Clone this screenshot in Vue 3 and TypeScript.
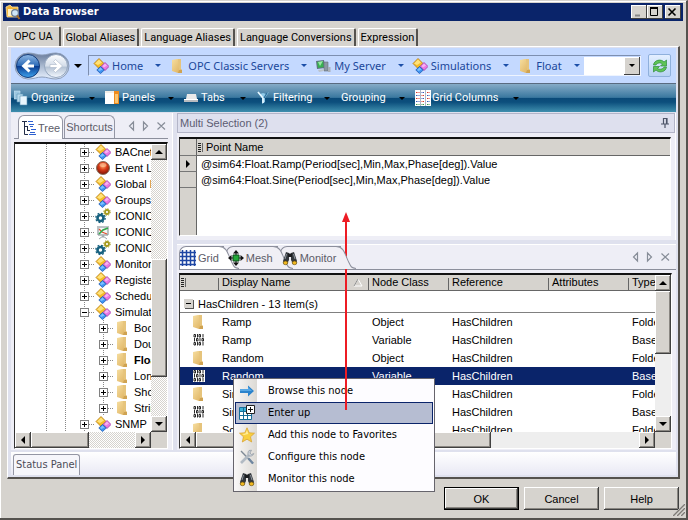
<script setup lang="ts">
import { ref } from 'vue'

interface TreeRow { label: string; icon: string; child?: boolean; open?: boolean; bold?: boolean }
interface NodeRow { name: string; kind: 'Object' | 'Variable'; type: string }

const pageTabs = ['OPC UA', 'Global Aliases', 'Language Aliases', 'Language Conversions', 'Expression']
const activePage = ref('OPC UA')

const crumbs = [
  { label: 'Home', icon: 'cubes' },
  { label: 'OPC Classic Servers', icon: 'folder' },
  { label: 'My Server', icon: 'server' },
  { label: 'Simulations', icon: 'cubes' },
  { label: 'Float', icon: 'folder' },
]

const tools = [
  { label: 'Organize', icon: 'stack' },
  { label: 'Panels', icon: 'panels' },
  { label: 'Tabs', icon: 'tabs' },
  { label: 'Filtering', icon: 'filter' },
  { label: 'Grouping', icon: '' },
  { label: 'Grid Columns', icon: 'columns' },
]

const tree: TreeRow[] = [
  { label: 'BACnet', icon: 'cubes' },
  { label: 'Event Log', icon: 'event' },
  { label: 'Global Events', icon: 'cubes' },
  { label: 'Groups', icon: 'cubes' },
  { label: 'ICONICS', icon: 'gears' },
  { label: 'ICONICS', icon: 'chart' },
  { label: 'ICONICS', icon: 'gears' },
  { label: 'Monitors', icon: 'cubes' },
  { label: 'Registers', icon: 'cubes' },
  { label: 'Schedules', icon: 'cubes' },
  { label: 'Simulations', icon: 'cubes', open: true },
  { label: 'Boolean', icon: 'folder', child: true },
  { label: 'Double', icon: 'folder', child: true },
  { label: 'Float', icon: 'folder', child: true, bold: true },
  { label: 'Long', icon: 'folder', child: true },
  { label: 'Short', icon: 'folder', child: true },
  { label: 'String', icon: 'folder', child: true },
  { label: 'SNMP', icon: 'cubes' },
]

const points = [
  '@sim64:Float.Ramp(Period[sec],Min,Max,Phase[deg]).Value',
  '@sim64:Float.Sine(Period[sec],Min,Max,Phase[deg]).Value',
]

const gridTabs = [
  { label: 'Grid', icon: 'grid' },
  { label: 'Mesh', icon: 'mesh' },
  { label: 'Monitor', icon: 'binoculars' },
]

const nodes: NodeRow[] = [
  { name: 'Ramp', kind: 'Object', type: 'FolderType' },
  { name: 'Ramp', kind: 'Variable', type: 'BaseData' },
  { name: 'Random', kind: 'Object', type: 'FolderType' },
  { name: 'Random', kind: 'Variable', type: 'BaseData' },
  { name: 'Sine', kind: 'Object', type: 'FolderType' },
  { name: 'Sine', kind: 'Variable', type: 'BaseData' },
  { name: 'Scale', kind: 'Object', type: 'FolderType' },
]
const selected = ref(3)

const menu = [
  { label: 'Browse this node', icon: 'arrow' },
  { label: 'Enter up', icon: 'enter' },
  { label: 'Add this node to Favorites', icon: 'star' },
  { label: 'Configure this node', icon: 'tools' },
  { label: 'Monitor this node', icon: 'binoculars' },
]
const hovered = ref(1)
</script>

<template>
  <div class="window">
    <svg class="defs" aria-hidden="true">
      <defs>
        <linearGradient id="g-folder" x1="0" y1="0" x2="1" y2="1"><stop offset="0" stop-color="#f6dea0" /><stop offset="1" stop-color="#dcae5a" /></linearGradient>
        <radialGradient id="g-event" cx=".5" cy=".35" r=".6"><stop offset="0" stop-color="#ffb070" /><stop offset=".5" stop-color="#d83c18" /><stop offset="1" stop-color="#8a1606" /></radialGradient>
        <linearGradient id="g-back" x1="0" y1="0" x2="0" y2="1"><stop offset="0" stop-color="#8fb8e4" /><stop offset=".48" stop-color="#2f6cb8" /><stop offset=".52" stop-color="#0a3d92" /><stop offset="1" stop-color="#3fa4ee" /></linearGradient>
        <linearGradient id="g-fwd" x1="0" y1="0" x2="0" y2="1"><stop offset="0" stop-color="#fdfeff" /><stop offset=".5" stop-color="#d4dde9" /><stop offset=".55" stop-color="#b4c2d4" /><stop offset="1" stop-color="#f4f9ff" /></linearGradient>
        <linearGradient id="g-pill" x1="0" y1="0" x2="0" y2="1"><stop offset="0" stop-color="#66799a" /><stop offset=".5" stop-color="#a9b9d0" /><stop offset="1" stop-color="#e8f1ff" /></linearGradient>
      </defs>
      <symbol id="i-cubes" viewBox="0 0 16 16">
        <path d="M6 0.5 11 5.5 6 10.5 1 5.5Z" fill="#f5bd28" stroke="#b57a12" stroke-width=".8" /><path d="M6 1.5 9 4.5 5 7 2 5.5Z" fill="#ffe27a" />
        <path d="M12 4.5 16 8.5 12 12.5 8 8.5Z" fill="#e878e4" stroke="#a03aa4" stroke-width=".8" /><path d="M12 5.5 14 7.5 11 9.5 9.5 8Z" fill="#f7b2f3" />
        <path d="M7.5 8.5 11.3 12 7.5 15.6 3.8 12Z" fill="#3d93f2" stroke="#1c58b0" stroke-width=".8" /><path d="M7.5 9.5 9.5 11.5 6.5 13 5 12Z" fill="#7cc0ff" />
      </symbol>
      <symbol id="i-folder" viewBox="0 0 16 16">
        <path d="M3 2 8 1 12 1 12 11 13 12 13 15 9 15 3 13Z" fill="url(#g-folder)" /><path d="M9 1H12V11L10 12Z" fill="#e6c47c" /><path d="M9 15 10 12 13 12V15Z" fill="#cfa352" />
      </symbol>
      <symbol id="i-server" viewBox="0 0 16 16">
        <path d="M1 3 9 2 10 10 2 11Z" fill="#607080" /><path d="M2 4 8 3 9 9 3 10Z" fill="#38b050" /><path d="M3 4 8 3 5 8Z" fill="#9be6a6" /><path d="M9 4H13V13H9Z" fill="#8b97a3" stroke="#66707b" stroke-width=".6" /><path d="M3 12 9 11 9 13 4 14Z" fill="#bbc3cb" /><rect x="13" y="9" width="2.500" height="5" fill="#a9b0b8" />
      </symbol>
      <symbol id="i-event" viewBox="0 0 16 16"><circle cx="8" cy="8" r="6.500" fill="url(#g-event)" stroke="#86705c" /><ellipse cx="8" cy="5" rx="3.500" ry="2" fill="#ffc79d" opacity=".6" /></symbol>
      <symbol id="i-gears" viewBox="0 0 16 16">
        <circle cx="5.500" cy="10" r="3" fill="none" stroke="#17617f" stroke-width="2.600" /><circle cx="5.500" cy="10" r="4.700" fill="none" stroke="#17617f" stroke-width="1.300" stroke-dasharray="1.850 1.840" />
        <circle cx="12" cy="4" r="2" fill="none" stroke="#a59a1e" stroke-width="1.800" /><circle cx="12" cy="4" r="3.300" fill="none" stroke="#a59a1e" stroke-width="1" stroke-dasharray="1.300 1.300" />
      </symbol>
      <symbol id="i-chart" viewBox="0 0 16 16">
        <path d="M2 3H14M3 4V11H13V4" fill="#f4f7f8" stroke="#78858b" /><path d="M8 11V14M8 12 4 15M8 12 12 15" stroke="#98a2a8" fill="none" /><path d="M4 5 7 8 12 10" stroke="#e05030" stroke-width="1.300" fill="none" /><path d="M4 10 8 6 13 4" stroke="#30a848" stroke-width="1.600" fill="none" />
      </symbol>
      <symbol id="i-stack" viewBox="0 0 16 16">
        <path d="M0 1H6V9H0Z" fill="#9cc7e0" stroke="#cfe6f4" stroke-width=".6" /><path d="M3 4H9V12H3Z" fill="#b7d9ec" stroke="#5c93b6" stroke-width=".6" /><path d="M6 6H13V15H6Z" fill="#e9f6fd" stroke="#5c93b6" stroke-width=".6" />
      </symbol>
      <symbol id="i-panels" viewBox="0 0 16 16"><path d="M0 1H14V14H0Z" fill="#fff" /><path d="M9 1H14V14H9Z" fill="#ef8b1c" /><path d="M10 4H13V13H10Z" fill="#fbc671" /><path d="M0 1H9V3H0Z" fill="#f1eee8" /></symbol>
      <symbol id="i-tabs" viewBox="0 0 16 16"><path d="M3 4H12L13 9H2Z" fill="#e9e9e9" /><path d="M0 9H14V12H0Z" fill="#b9bcc0" /><path d="M0 9H14V10H0Z" fill="#fff" /></symbol>
      <symbol id="i-filter" viewBox="0 0 16 16"><path d="M1 2 6 8V14L9 12V8L13 2 10 4 7 3 4 4Z" fill="#8fc9e8" /><path d="M2 2 7 8V13" fill="none" stroke="#e6f7ff" stroke-width="1.600" /><path d="M11 3 8 8" stroke="#2c6e9a" stroke-width="1.300" /></symbol>
      <symbol id="i-columns" viewBox="0 0 16 16">
        <path d="M0 0H16V16H0Z" fill="#fff" /><path d="M5.500 0V16M10.500 0V16" stroke="#8a9ab0" stroke-width=".7" />
        <path d="M1 2.500H4.500M1 8.500H4.500M6.500 5.500H9.500M6.500 11.500H9.500M12 2.500H15M12 8.500H15" stroke="#d83828" stroke-dasharray="1 .5" /><path d="M1 5.500H4.500M1 11.500H4.500M6.500 2.500H9.500M6.500 8.500H9.500M12 5.500H15M12 11.500H15" stroke="#3458b8" stroke-dasharray="1 .5" /><path d="M1 14.500H4.500M6.500 14.500H9.500M12 14.500H15" stroke="#3c9a44" stroke-dasharray="1 .5" />
      </symbol>
      <symbol id="i-treeview" viewBox="0 0 16 16">
        <path d="M1 1.500H6M3.500 2V14.500M3.500 6.500H7M3.500 14.500H7M6.500 10.500H9M6.500 6V11" stroke="#222c48" fill="none" /><path d="M7 1.500H12M8 4.500H13M9 6.500H12M10 9.500H15M9 12.500H14M8 14.500H15" stroke="#2c5fd0" />
      </symbol>
      <symbol id="i-grid" viewBox="0 0 16 16"><path d="M2.500 0V16M6.500 0V16M10.500 0V16M14.500 0V16M0 2.500H16M0 6.500H16M0 10.500H16M0 14.500H16" stroke="#1e46a4" stroke-width="1.500" /></symbol>
      <symbol id="i-mesh" viewBox="0 0 16 16"><path d="M8 0 11 3.500H5ZM8 16 11 12.500H5ZM0 8 3.500 5V11ZM16 8 12.500 5V11Z" fill="#111" /><path d="M8 2V14M2 8H14" stroke="#111" /><path d="M5 5H11V11H5Z" fill="#22a838" stroke="#0d4d1a" /></symbol>
      <symbol id="i-binoculars" viewBox="0 0 16 16">
        <path d="M4 2 7 3V10L5 14H2L1 11 3 5ZM12 2 9 3V10L11 14H14L15 11 13 5Z" fill="#34383d" /><path d="M6 3.500H10V7H6Z" fill="#1b1d20" /><path d="M4.500 4 3 9M11.500 4 13 9" stroke="#8e959e" /><ellipse cx="3.500" cy="12.800" rx="2.300" ry="1.900" fill="#f0b820" stroke="#5c4408" stroke-width=".6" /><ellipse cx="12.500" cy="12.800" rx="2.300" ry="1.900" fill="#f0b820" stroke="#5c4408" stroke-width=".6" />
      </symbol>
      <symbol id="i-bits" viewBox="0 0 12 12">
        <path d="M0 0H12V12H0Z" fill="#fff" />
        <g fill="none" stroke="#111" stroke-width=".9"><path d="M1 .5H2.500V3H1ZM6 .5H7.500V3H6ZM4.500 0V3.500M10 0V3.500M1 8.500H2.500V11H1ZM6 8.500H7.500V11H6ZM4.500 8V11.500M10 8V11.500M1.500 4V7.500M3.500 4.500H5V7H3.500ZM7 4V7.500M9 4.500H10.500V7H9Z" /></g>
      </symbol>
      <symbol id="i-arrow" viewBox="0 0 16 16"><path d="M1 6H9V2.500L15 8 9 13.500V10H1Z" fill="#2c83cc" /><path d="M1 6H9V4L13 8H1Z" fill="#58a7e4" /></symbol>
      <symbol id="i-enter" viewBox="0 0 16 16">
        <path d="M.5 2.500H12.500V14.500H.5Z" fill="#fff" stroke="#176c96" /><path d="M1 3H12V6H1Z" fill="#3cb2d8" /><path d="M.5 6.500H12.500M.5 10.500H12.500M4.500 3V14M8.500 3V14" stroke="#176c96" /><path d="M7.500.5H15.500V8.500H7.500Z" fill="#fff" stroke="#222" /><path d="M11.500 2V7M9 4.500H14" stroke="#111" />
      </symbol>
      <symbol id="i-star" viewBox="0 0 16 16"><path d="M8 .8 10.200 5.800 15.500 6.200 11.500 9.800 12.700 15 8 12.200 3.300 15 4.500 9.800 .5 6.200 5.800 5.800Z" fill="#f9cf3e" stroke="#d9a436" stroke-width=".8" /><path d="M8 3 9.300 7 5 8 3 7 6.500 6.600Z" fill="#ffec9a" /></symbol>
      <symbol id="i-tools" viewBox="0 0 16 16"><path d="M2 2 14 14.500" stroke="#7f8a96" stroke-width="1.400" /><path d="M2 14 10 6" stroke="#b2bac3" stroke-width="2.600" /><path d="M10 1.500C8.500 3 8.500 6 10 6.800S14 7 14.800 4.500L12.500 5.500 11 4 12.500 1.200Z" fill="#c9ced5" stroke="#8f98a2" stroke-width=".7" /><path d="M9.500 9.500 14 14.500" stroke="#6f86a0" stroke-width="2.300" /></symbol>
      <symbol id="i-refresh" viewBox="0 0 16 16">
        <path d="M1.500 7C2 2 9 .5 12 4L14.500 2V8H8.500L10.500 6C8 4 5 5 4 7Z" fill="#5fc456" stroke="#2f8d3c" stroke-width=".7" /><path d="M14.500 9C14 14 7 15.500 4 12L1.500 14V8.500H7.500L5.500 10.500C8 12 11 11 12 9Z" fill="#5fc456" stroke="#2f8d3c" stroke-width=".7" />
      </symbol>
      <symbol id="i-app" viewBox="0 0 16 16"><path d="M1 3 5 1 7 3H13V13H2Z" fill="#f3b63a" stroke="#fce3a2" stroke-width=".8" /><path d="M3 5H8V12H3Z" fill="#fff1c4" /><circle cx="10" cy="9" r="3.400" fill="#cfe6f8" stroke="#6c7c90" stroke-width="1.200" /><path d="M12 11.500 14.500 15" stroke="#a66a22" stroke-width="2" /></symbol>
      <symbol id="i-pin" viewBox="0 0 10 12"><path d="M3 1.500H7V6.500M3.500 1V7M6.500 1V7M1 7H9M5 7V11" fill="none" stroke="#4c5468" stroke-width="1.200" /></symbol>
    </svg>

    <header class="titlebar">
      <svg class="icon"><use href="#i-app" /></svg>
      <h1>Data Browser</h1>
      <button class="caption" aria-label="Minimize"><svg viewBox="0 0 12 10"><path d="M3 8.500H8" stroke="#888" stroke-width="2" /></svg></button>
      <button class="caption" aria-label="Maximize"><svg viewBox="0 0 12 10"><path d="M2 1H10" stroke="#000" stroke-width="2" /><path d="M2.500 1V8.500H9.500V1" fill="none" stroke="#000" /></svg></button>
      <button class="caption close" aria-label="Close"><svg viewBox="0 0 12 10"><path d="M2.500 1.500 9.500 8.500M9.500 1.500 2.500 8.500" stroke="#000" stroke-width="1.600" /></svg></button>
    </header>

    <nav class="page-tabs">
      <button v-for="t in pageTabs" :key="t" :class="{ active: t === activePage }" @click="activePage = t">{{ t }}</button>
    </nav>

    <main class="page">
      <div class="navbar">
        <div class="history">
          <svg class="pill" viewBox="0 0 56 28" aria-hidden="true">
            <path d="M14 1C20 1 23 3 28 3S36 1 42 1A13 13 0 0 1 42 27C36 27 33 25 28 25S20 27 14 27A13 13 0 0 1 14 1Z" fill="url(#g-pill)" stroke="#8c9db8" />
            <circle cx="14" cy="14" r="11.500" fill="url(#g-back)" stroke="#163c7a" /><circle cx="42" cy="14" r="11.500" fill="url(#g-fwd)" stroke="#94a6bf" />
            <path d="M20 12.500H13.500L16.500 9.500 14.500 7.500 7.500 14 14.500 20.500 16.500 18.500 13.500 15.500H20Z" fill="#fff" /><path d="M36 12.500H42.500L39.500 9.500 41.500 7.500 48.500 14 41.500 20.500 39.500 18.500 42.500 15.500H36Z" fill="#fff" stroke="#a9b6c8" stroke-width=".6" />
          </svg>
          <button aria-label="Back"></button><button aria-label="Forward"></button>
        </div>
        <i class="caret"></i>
        <div class="address">
          <a v-for="c in crumbs" :key="c.label" href="#" @click.prevent>
            <svg class="icon"><use :href="'#i-' + c.icon" /></svg><span>{{ c.label }}</span><i class="caret blue"></i>
          </a>
          <div class="picker">
            <select aria-label="Address"><option></option></select>
            <span class="drop"><i class="caret"></i></span>
          </div>
        </div>
        <button class="refresh" aria-label="Refresh"><svg class="icon"><use href="#i-refresh" /></svg></button>
      </div>

      <div class="toolbar">
        <button v-for="t in tools" :key="t.label">
          <svg v-if="t.icon" class="icon"><use :href="'#i-' + t.icon" /></svg><span>{{ t.label }}</span><i class="caret"></i>
        </button>
      </div>

      <div class="docks">
        <section class="dock side">
          <div class="dock-head">
            <button class="side-tab active"><svg class="icon"><use href="#i-treeview" /></svg>Tree</button>
            <button class="side-tab">Shortcuts</button>
            <svg class="steppers" viewBox="0 0 40 12" aria-hidden="true"><path d="M5.500 2 1.500 6 5.500 10ZM15.500 2 19.500 6 15.500 10ZM29.500 2.500 37 9.500M37 2.500 29.500 9.500" /></svg>
          </div>
          <div class="frame tree-frame">
            <ul class="tree">
              <li v-for="(r, i) in tree" :key="i" :class="{ bold: r.bold }">
                <i class="guide"></i><i class="guide"></i><i v-if="r.child" class="guide"></i>
                <span class="guide node"><button :aria-label="r.open ? 'Collapse' : 'Expand'"><svg viewBox="0 0 9 9"><path :d="r.open ? 'M2 4.500H7' : 'M2 4.500H7M4.500 2V7'" stroke="#000" /></svg></button></span>
                <svg class="icon"><use :href="'#i-' + r.icon" /></svg><span>{{ r.label }}</span>
              </li>
            </ul>
            <div class="scroll v dither"><button aria-label="Up"><i class="tri up"></i></button><i class="track before"></i><i class="thumb"></i><i class="track after"></i><button aria-label="Down"><i class="tri down"></i></button></div>
            <div class="scroll h dither"><button aria-label="Left"><i class="tri left"></i></button><i class="thumb"></i><i class="track after"></i><button aria-label="Right"><i class="tri right"></i></button></div>
            <i class="corner"></i>
          </div>
        </section>

        <div class="column">
          <section class="dock selection">
            <header class="caption-bar"><h2>Multi Selection (2)</h2><svg class="pin"><use href="#i-pin" /></svg></header>
            <div class="frame">
              <table class="points">
                <thead><tr><th class="marker"></th><th><i class="grip"></i>Point Name</th></tr></thead>
                <tbody>
                  <tr v-for="(p, i) in points" :key="p"><td class="marker"><i v-if="i === 0" class="tri right"></i></td><td>{{ p }}</td></tr>
                  <tr class="fill"><td class="marker"></td><td></td></tr>
                </tbody>
              </table>
            </div>
          </section>

          <section class="dock nodes">
            <div class="dock-head">
              <button v-for="(t, i) in gridTabs" :key="t.label" class="slant-tab" :class="{ active: i === 0 }">
                <svg class="slope" viewBox="0 0 20 22" preserveAspectRatio="none" aria-hidden="true"><path d="M0 .5C8 .5 9 8 12 14S15 21 20 21.500V22H0Z" :fill="i === 0 ? '#fff' : '#f0eff5'" /><path d="M0 .5C8 .5 9 8 12 14S15 21 20 21.500" fill="none" stroke="#8c8f9c" /></svg>
                <svg class="icon"><use :href="'#i-' + t.icon" /></svg><span>{{ t.label }}</span>
              </button>
              <svg class="steppers" viewBox="0 0 40 12" aria-hidden="true"><path d="M5.500 2 1.500 6 5.500 10ZM15.500 2 19.500 6 15.500 10ZM29.500 2.500 37 9.500M37 2.500 29.500 9.500" /></svg>
            </div>
            <div class="frame grid-frame">
              <div class="grid-view">
                <table class="grid">
                  <colgroup><col class="c-grip" /><col class="c-icon" /><col class="c-name" /><col class="c-class" /><col class="c-ref" /><col class="c-attr" /><col /></colgroup>
                  <thead>
                    <tr><th><i class="grip"></i></th><th></th><th><span class="sorted">Display Name<svg viewBox="0 0 10 9"><path d="M5 1 9 8H1Z" fill="none" stroke="#fff" /><path d="M1 8 5 1" stroke="#8c8c8c" /></svg></span></th><th>Node Class</th><th>Reference</th><th>Attributes</th><th>Type</th></tr>
                  </thead>
                  <tbody>
                    <tr class="group"><td colspan="7"><button aria-label="Collapse group"></button>HasChildren - 13 Item(s)</td></tr>
                    <tr v-for="(n, i) in nodes" :key="i" :class="{ selected: i === selected }" @click="selected = i">
                      <td></td><td class="pic"><svg :class="n.kind === 'Object' ? 'icon' : 'bits'"><use :href="n.kind === 'Object' ? '#i-folder' : '#i-bits'" /></svg></td>
                      <td>{{ n.name }}</td><td>{{ n.kind }}</td><td>HasChildren</td><td></td><td>{{ n.type }}</td>
                    </tr>
                  </tbody>
                </table>
              </div>
              <div class="scroll v"><button aria-label="Up"><i class="tri up"></i></button><i class="thumb"></i><i class="track after"></i><button aria-label="Down"><i class="tri down"></i></button></div>
              <div class="scroll h"><button aria-label="Left"><i class="tri left"></i></button><i class="thumb"></i><i class="track after"></i><button aria-label="Right"><i class="tri right"></i></button></div>
              <i class="corner"></i>
            </div>
          </section>
        </div>
      </div>

      <div class="status"><button>Status Panel</button></div>
    </main>

    <footer class="actions">
      <button class="push default">OK</button>
      <button class="push">Cancel</button>
      <button class="push">Help</button>
    </footer>
    <svg class="resizer" viewBox="0 0 14 14" aria-hidden="true"><path d="M1 14 14 1M5 14 14 5M9 14 14 9" stroke="#fff" stroke-width="1" /><path d="M2 14 14 2M6 14 14 6M10 14 14 10" stroke="#7f7c77" stroke-width="1.500" /></svg>

    <ul class="context" role="menu">
      <li v-for="(m, i) in menu" :key="m.label" role="none">
        <button role="menuitem" :class="{ hot: i === hovered }" @mouseenter="hovered = i"><svg class="icon"><use :href="'#i-' + m.icon" /></svg>{{ m.label }}</button>
      </li>
    </ul>
    <svg class="pointer" viewBox="0 0 10 198" aria-hidden="true"><path d="M5 8V198" stroke="#ed1c24" stroke-width="2" /><path d="M5 0 9 10H1Z" fill="#ed1c24" /></svg>
  </div>
</template>

<style>
body { margin: 0; }
</style>

<style scoped>
* { box-sizing: border-box; }
.window { position: relative; display: flex; flex-direction: column; height: 100vh; min-height: 480px; overflow: hidden; padding: 2px 3px 3px; background: #d6d3ce; border-right: 2px solid #55524e; border-bottom: 2px solid #55524e; border-top: 1px solid #d6d3ce; font: 11px/16px "Liberation Sans", Arial, sans-serif; color: #000; box-shadow: inset 1px 1px #fff; }
.defs { position: absolute; width: 0; height: 0; }
button { font: inherit; color: inherit; padding: 0; border: 0; background: none; white-space: nowrap; }
h1, h2, ul { margin: 0; padding: 0; list-style: none; font: inherit; }
.icon { width: 16px; height: 16px; flex: none; }

.titlebar { display: flex; align-items: center; height: 18px; flex: none; padding: 0 2px; background: #0a246a; color: #fff; }
.titlebar h1 { flex: 1; padding-left: 2px; font: bold 11px/16px "DejaVu Sans Condensed", sans-serif; }
.caption { width: 16px; height: 14px; background: #d6d3ce; box-shadow: inset -1px -1px #404040, inset 1px 1px #fff; }
.caption svg { display: block; width: 12px; height: 10px; margin: 1px; }
.close { margin-left: 2px; }

.page-tabs { display: flex; align-items: flex-end; height: 25px; flex: none; padding-left: 4px; padding-top: 5px; gap: 2px; font: 11px/16px Roboto, sans-serif; }
.page-tabs button { height: 18px; padding: 0 2px; border: 1px solid #fff; border-bottom: 0; border-right: 2px solid #55524e; border-radius: 2px 2px 0 0; background: #d6d3ce; }
.page-tabs .active { height: 20px; padding: 0 6px; }

.page { display: flex; flex: 1; flex-direction: column; min-height: 0; margin: 0 3px 0 4px; padding: 1px 2px 2px 3px; border: 1px solid #fff; border-right: 2px solid #55524e; border-bottom: 2px solid #55524e; background: #dfe1ee; }
.navbar { display: flex; align-items: center; height: 36px; flex: none; padding: 0 5px 0 3px; background: #c4d9ff; border-bottom: 1px solid #5a6b80; }
.history { position: relative; display: flex; width: 56px; height: 28px; }
.history button { flex: 1; z-index: 1; }
.pill { position: absolute; inset: 0; }
.caret { display: block; flex: none; width: 0; height: 0; border: 3px solid transparent; border-top-color: #000; border-bottom: 0; }
.caret.blue { border-top-color: #1c4fa8; }
.navbar > .caret { margin: 0 6px 0 4px; border-width: 4px 4px 0; }
.address { display: flex; flex: 1; align-items: center; height: 21px; border: 1px solid #eef4ff; border-top-color: #7d8fb0; border-left-color: #7d8fb0; min-width: 0; }
.address a { display: flex; align-items: center; flex: none; padding: 0 4px; color: #1a479a; text-decoration: none; font: 11px/16px "Noto Sans", sans-serif; }
.address a span { padding: 0 12px 0 3px; }
.picker { position: relative; display: flex; flex: 1; height: 18px; background: #fff; }
.picker select { flex: 1; min-width: 0; appearance: none; border: 0; background: #fff; }
.drop { position: absolute; right: 0; top: 0; display: grid; place-items: center; width: 16px; height: 18px; background: #d6d3ce; box-shadow: inset -1px -1px #404040, inset 1px 1px #fff; pointer-events: none; }
.refresh { display: grid; place-items: center; width: 23px; height: 23px; margin-left: 7px; border: 1px solid #8fb0dc; border-radius: 2px; background: linear-gradient(#e4efff, #b8d2f4); }

.toolbar { display: grid; grid-template-columns: 91px 79px 72px 84px 75px max-content; align-items: center; height: 28px; flex: none; padding-left: 3px; background: linear-gradient(#86abc7, #3a789f 48%, #0a4a78 50%, #0c4f7d 65%, #3f8fae); color: #fff; font: 11px/16px Roboto, sans-serif; }
.toolbar button { display: flex; align-items: center; gap: 1px; }
.toolbar button:nth-child(5) { padding-left: 1px; }
.toolbar .caret { margin-left: auto; margin-right: 10px; border-top-color: #000; }
.toolbar button:last-child .caret { margin-left: 14px; }

.docks { display: flex; flex: 1; gap: 4px; min-height: 0; padding: 1px 0 2px; }
.dock { display: flex; flex-direction: column; background: #eeeef6; min-height: 0; }
.side { width: 162px; flex: none; padding: 0 4px 1px 3px; border-right: 1px solid #fff; }
.dock-head { display: flex; align-items: flex-end; height: 26px; flex: none; color: #5c5c68; border-bottom: 1px solid #8c8f9c; }
.side .dock-head { padding: 0 0 0 4px; margin: 0 0 3px; }
.side-tab { display: flex; align-items: center; height: 23px; padding: 0 2px; border: 1px solid #9496a4; border-bottom: 0; border-radius: 6px 6px 0 0; }
.side-tab.active { gap: 1px; height: 24px; margin-bottom: -1px; background: #fff; }
.side-tab + .side-tab { margin-left: 1px; padding: 0 1px; }
.steppers { width: 40px; height: 12px; flex: none; margin: 0 0 6px auto; }
.steppers path { fill: none; stroke: #878d98; stroke-width: 1.2; }

.frame { display: grid; flex: 1; min-height: 0; border: 1px solid #fff; border-top: 2px solid #111; border-left: 1px solid #333; background: #fff; overflow: hidden; }
.tree-frame, .grid-frame { grid-template: minmax(0, 1fr) 16px / minmax(0, 1fr) 16px; }
.tree { overflow: hidden; min-height: 0; }
.tree li { display: flex; align-items: center; height: 16px; padding-left: 22px; white-space: nowrap; }
.tree li > .icon { margin: 0 4px 0 1px; }
.guide { position: relative; flex: none; width: 19px; height: 16px; background: repeating-linear-gradient(#888 0 1px, transparent 1px 2px) 9px 0 / 1px 16px no-repeat; }
.node { display: grid; place-items: center; }
.node button { width: 9px; height: 9px; outline: 0; border: 1px solid #808080; background: #fff; }
.node svg { display: block; width: 9px; height: 9px; margin: -1px; }
.node::after { content: ""; position: absolute; top: 8px; right: 0; width: 5px; border-top: 1px dotted #888; }
.bold { font-weight: bold; }

.scroll { display: flex; background: #eeeeee; }
.dither { background: repeating-conic-gradient(#d6d3ce 0 25%, #fff 0 50%) 0 0 / 2px 2px; }
.v { flex-direction: column; }
.scroll button, .thumb { display: grid; place-items: center; background: #d6d3ce; box-shadow: inset -1px -1px #404040, inset 1px 1px #fff, inset -2px -2px #8a8782; }
.scroll button { width: 16px; height: 16px; flex: none; }
.tree-frame .v .before { flex: 99; }
.tree-frame .v .thumb { flex: 119; }
.tree-frame .v .after { flex: 39; }
.tree-frame .h .thumb { flex: 57; }
.tree-frame .h .after { flex: 46; }
.grid-frame .v .thumb, .grid-frame .v .after { flex: 1; }
.grid-frame .h .thumb { flex: 2; }
.grid-frame .h .after { flex: 1; }
.corner { background: #d6d3ce; }
.tri { display: block; width: 0; height: 0; border: 4px solid transparent; }
.up { border-bottom-color: #000; border-top: 0; }
.down { border-top-color: #000; border-bottom: 0; }
.left { border-right-color: #000; border-left: 0; }
.right { border-left-color: #000; border-right: 0; }

.column { display: flex; flex: 1; flex-direction: column; gap: 4px; min-width: 0; }
.selection { flex: 0 0 127px; padding: 0 4px 4px 2px; border-right: 1px solid #fff; }
.caption-bar { display: flex; align-items: center; justify-content: space-between; height: 20px; flex: none; margin: 0 -4px 4px -2px; padding: 0 4px 0 2px; background: #dee0ee; border: 1px solid #b3b5c8; color: #5c5c72; }
.pin { width: 10px; height: 12px; }
table { border-collapse: separate; border-spacing: 0; width: 100%; }
td, th { padding: 0; text-align: left; font-weight: normal; white-space: nowrap; overflow: hidden; }
th { background: #d6d3ce; border-bottom: 1px solid #666; }
.points { height: 100%; }
.points th { height: 17px; }
.points td { height: 16px; padding-left: 4px; }
.points .marker { width: 17px; padding: 0 0 0 6px; background: #d6d3ce; border-right: 1px solid #666; border-bottom: 1px solid #777; }
.points .fill td { height: auto; border-bottom: 0; }
.grip { display: inline-block; width: 5px; height: 9px; margin: 0 3px 0 1px; vertical-align: -1px; border-right: 1px solid #666; background: repeating-linear-gradient(#222 0 1px, transparent 1px 2px) 0 0 / 3px 9px no-repeat; }

.nodes { flex: 1; padding: 0 4px 1px 2px; border-top: 1px solid #fff; }
.nodes .dock-head { height: 25px; margin: 0 -4px 3px 0; padding-right: 4px; }
.slant-tab { position: relative; display: flex; align-items: center; gap: 2px; height: 23px; padding: 0 5px 0 0; border: 1px solid #8c8f9c; border-right: 0; border-bottom: 0; border-radius: 7px 0 0 0; background: #f0eff5; }
.slant-tab + .slant-tab { margin-left: 2px; padding-left: 1px; }
.slant-tab.active { background: #fff; }
.slope { position: absolute; z-index: 1; right: -15px; top: -1px; width: 20px; height: 23px; }
.slant-tab > .icon, .slant-tab > span { position: relative; z-index: 2; }
.grid-view { overflow: hidden; min-height: 0; }
.grid { table-layout: fixed; }
.c-grip { width: 7px; }
.c-icon { width: 32px; }
.c-name { width: 150px; }
.c-class { width: 80px; }
.c-ref { width: 100px; }
.c-attr { width: 80px; }
.grid th { height: 16px; line-height: 15px; padding-left: 3px; background: linear-gradient(#666, #666) 100% 3px / 1px 12px no-repeat #d6d3ce; }
.grid th:first-child { padding: 0; }
.grid th:first-child, .grid th:last-child { background: #d6d3ce; }
.grid td { height: 18px; padding-left: 3px; }
.pic svg { display: block; }
.pic .bits { width: 12px; height: 12px; margin-left: 3px; }
.sorted { display: flex; align-items: center; justify-content: space-between; padding-right: 6px; }
.sorted svg { width: 10px; height: 9px; }
.grid .group td { height: 22px; padding: 5px 0 0 4px; border-bottom: 1px solid #808080; }
.group button { width: 9px; height: 9px; margin-right: 5px; background: linear-gradient(#000, #000) 2px 4px / 5px 1px no-repeat #d6d3ce; box-shadow: 1px 1px #555; }
.selected td { background: #0a246a; color: #fff; }

.status { display: flex; align-items: flex-end; height: 23px; flex: none; padding-left: 2px; background: linear-gradient(#fff, #e9e9f5); }
.status button { height: 21px; padding: 0 2px; border: 1px solid #9496a4; border-bottom: 0; border-radius: 3px 3px 0 0; background: #f6f6fb; color: #4c4c58; font: 11px/16px "DejaVu Sans Condensed", sans-serif; }

.actions { display: flex; flex: none; justify-content: flex-end; gap: 5px; padding: 8px 4px 5px; }
.push { width: 75px; height: 23px; background: #d6d3ce; box-shadow: inset -1px -1px #404040, inset 1px 1px #fff, inset -2px -2px #8a8782; }
.push.default { border: 1px solid #000; }
.resizer { position: absolute; right: 1px; bottom: 2px; width: 14px; height: 14px; }

.context { position: absolute; left: 233px; top: 377px; width: 202px; padding: 1px; border: 1px solid #66646c; background: linear-gradient(90deg, #faf8f8, #dcd9d4 23px, transparent 23px) no-repeat #fdfcff; font: 11px/16px "DejaVu Sans Condensed", sans-serif; }
.context button { display: flex; align-items: center; gap: 13px; width: 100%; height: 22px; padding: 0 3px; border: 1px solid transparent; }
.context .hot { border-color: #0a246a; background: #b6bdd2; }
.pointer { position: absolute; left: 341px; top: 211px; width: 10px; height: 198px; pointer-events: none; }
</style>
